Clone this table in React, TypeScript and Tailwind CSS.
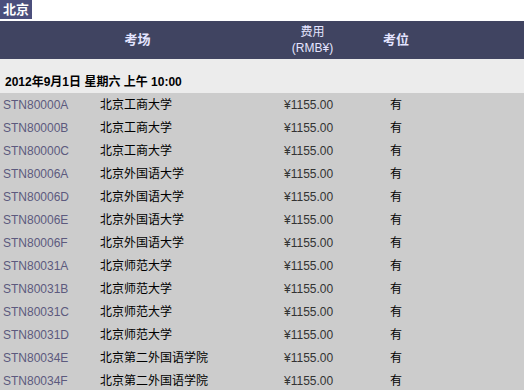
import React from "react";

type Seat = { code: string; venue: string };

const seats: Seat[] = [
  { code: "STN80000A", venue: "北京工商大学" },
  { code: "STN80000B", venue: "北京工商大学" },
  { code: "STN80000C", venue: "北京工商大学" },
  { code: "STN80006A", venue: "北京外国语大学" },
  { code: "STN80006D", venue: "北京外国语大学" },
  { code: "STN80006E", venue: "北京外国语大学" },
  { code: "STN80006F", venue: "北京外国语大学" },
  { code: "STN80031A", venue: "北京师范大学" },
  { code: "STN80031B", venue: "北京师范大学" },
  { code: "STN80031C", venue: "北京师范大学" },
  { code: "STN80031D", venue: "北京师范大学" },
  { code: "STN80034E", venue: "北京第二外国语学院" },
  { code: "STN80034F", venue: "北京第二外国语学院" },
];

const cols = "grid grid-cols-[97px_178px_75px_92px_1fr]";

export default function App() {
  return (
    <div
      className="w-[524px] h-[390px] overflow-hidden bg-white text-[12px]"
      style={{ fontFamily: '"Liberation Sans", Arial, "Noto Sans CJK SC", sans-serif' }}
    >
      <div className="h-[21px]">
        <span className="inline-flex h-[19px] w-[32px] items-center justify-center bg-[#4b4f7c] text-[13px] font-bold text-white">
          北京
        </span>
      </div>
      <div className={`${cols} h-[38px] items-center bg-[#404461] text-[#e4e4ff]`}>
        <div className="col-span-2 text-center font-bold text-[13px]">考场</div>
        <div className="text-center leading-[16px]">
          费用
          <br />
          (RMB¥)
        </div>
        <div className="text-center font-bold text-[13px]">考位</div>
        <div />
      </div>
      <div className="h-[34px] bg-[#ececec] pl-[5px] pt-[14px] text-[12px] font-bold text-black">
        2012年9月1日 星期六 上午 10:00
      </div>
      {seats.map((s) => (
        <div key={s.code} className={`${cols} h-[23px] items-center bg-[#cccccc]`}>
          <div className="pl-[3px] text-[#5c5a7e]">{s.code}</div>
          <div className="pl-[3px] text-black">{s.venue}</div>
          <div className="pl-[9px] text-[#333]">¥1155.00</div>
          <div className="text-center text-black">有</div>
          <div />
        </div>
      ))}
    </div>
  );
}
